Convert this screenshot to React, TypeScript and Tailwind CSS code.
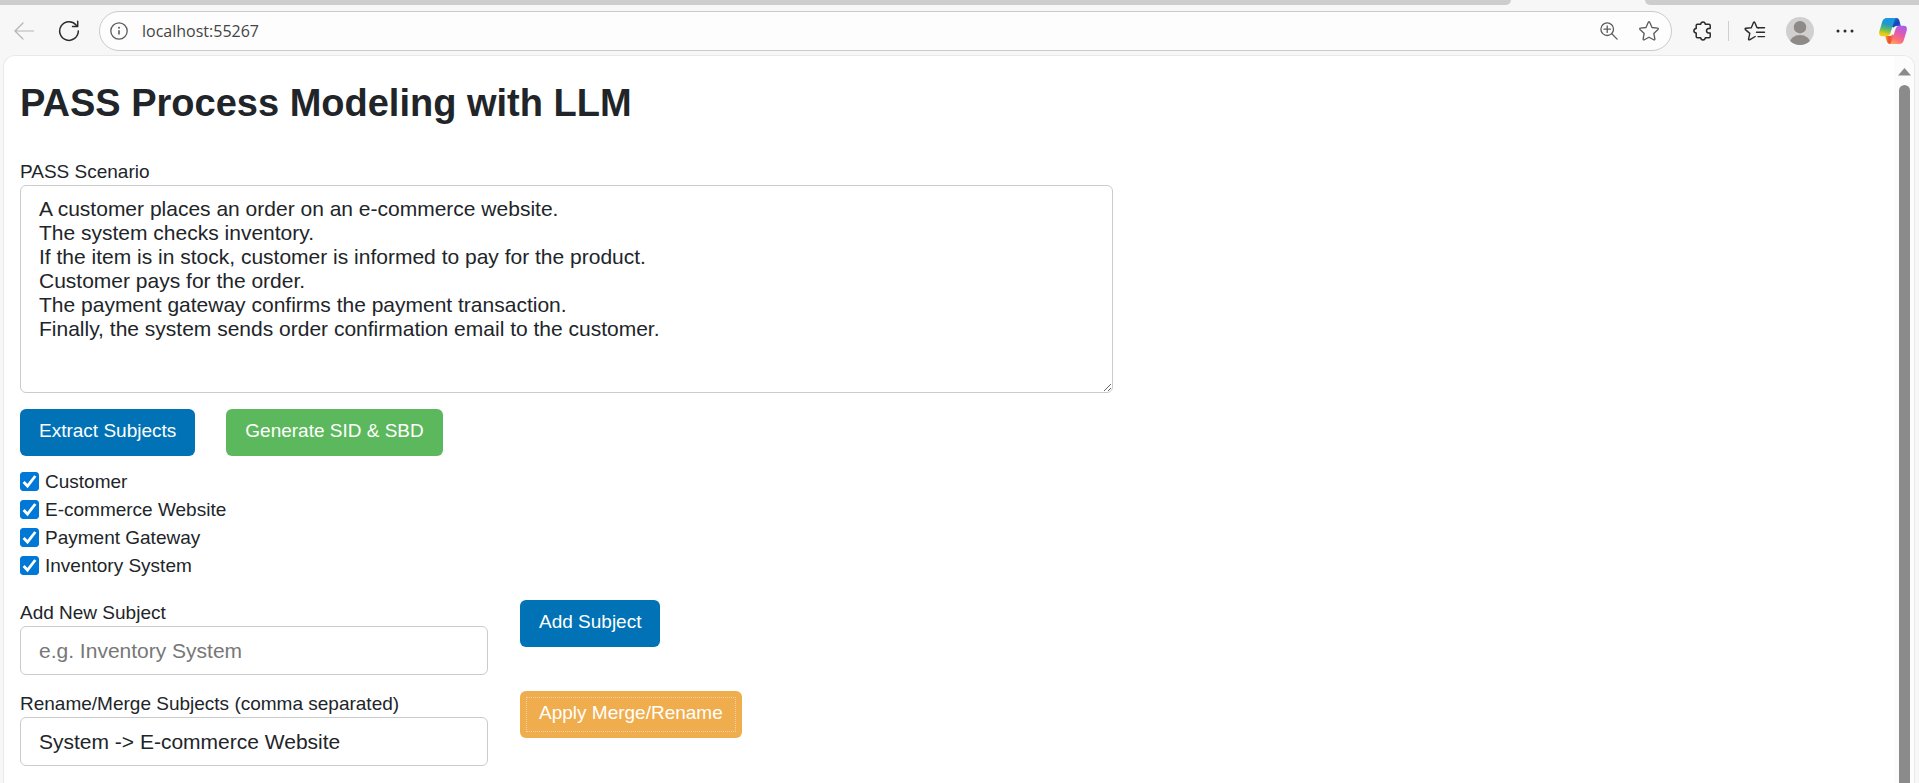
import React, { useState } from "react";

const SCENARIO = `A customer places an order on an e-commerce website.
The system checks inventory.
If the item is in stock, customer is informed to pay for the product.
Customer pays for the order.
The payment gateway confirms the payment transaction.
Finally, the system sends order confirmation email to the customer.`;

const SUBJECTS = ["Customer", "E-commerce Website", "Payment Gateway", "Inventory System"];

const line = {
  fill: "none",
  stroke: "currentColor",
  strokeLinecap: "round" as const,
  strokeLinejoin: "round" as const,
};

function BackIcon() {
  return (
    <svg width="20" height="18" viewBox="0 0 20 18" strokeWidth="1.2" {...line}>
      <path d="M19.5 9H1M9 1 1 9l8 8" />
    </svg>
  );
}

function ReloadIcon() {
  return (
    <svg width="22" height="22" viewBox="0 0 22 22" strokeWidth="1.5" {...line}>
      <path d="M20.3 11A9.3 9.3 0 1 1 17.8 4.7L19.6 6.4M19.7 1.3v5.2h-5.2" />
    </svg>
  );
}

function InfoIcon() {
  return (
    <svg width="18" height="18" viewBox="0 0 18 18" strokeWidth="1.3" {...line}>
      <circle cx="9" cy="9" r="8.2" />
      <path d="M9 8.3v4.2" strokeWidth="1.6" strokeLinecap="butt" />
      <circle cx="9" cy="5.8" r="1" fill="currentColor" stroke="none" />
    </svg>
  );
}

function ZoomIcon() {
  return (
    <svg width="18" height="18" viewBox="0 0 18 18" strokeWidth="1.3" {...line}>
      <circle cx="7.2" cy="7.2" r="6.3" />
      <path d="m11.8 11.8 5.3 5.3M7.2 4v6.4M4 7.2h6.4" />
    </svg>
  );
}

function StarIcon() {
  return (
    <svg width="20" height="20" viewBox="0 0 20 20" strokeWidth="1.3" {...line}>
      <path d="M9.3 1.3q.7-1.2 1.4 0l2.3 5.2 5.6.7q1.2.3.4 1.3l-4.2 4 1.1 5.5q0 1.3-1.2.8L10 16.2l-4.7 2.6q-1.2.5-1.2-.8l1.1-5.5L1 8.500q-.8-1 .4-1.300L7 6.500Z" />
    </svg>
  );
}

function PuzzleIcon() {
  return (
    <svg width="20" height="20" viewBox="0 0 20 20" strokeWidth="1.5" {...line}>
      <path d="M4.500 3.300H7.600Q8 .9 10 .9t2.400 2.400h3.500q1.300 0 1.300 1.300v2.900h-1.500q-2.200.3-2.200 2.300t2.200 2.300h1.500v3.300q0 1.300-1.300 1.300h-3.500Q12 19.100 10 19.100t-2.400-2.400H4.500q-1.300 0-1.300-1.300v-3.300Q.9 11.800.9 9.800t2.300-2.300V4.600q0-1.300 1.300-1.300Z" />
    </svg>
  );
}

function FavoritesIcon() {
  return (
    <svg width="22" height="20" viewBox="0 0 22 20" strokeWidth="1.4" {...line}>
      <path d="M11.200 15.500 5.600 18.800q-1.200.4-1-.9l1.200-5.500L1.400 8.600q-.8-1 .4-1.300l5.500-.6 2.200-5.200q.7-1.100 1.300 0l2.200 5.100 1.500.2" />
      <path d="M14 6.800h6.500M12.500 11.200h8M14 15.600h6.500" />
    </svg>
  );
}

function Avatar() {
  return (
    <svg width="28" height="28" viewBox="0 0 28 28">
      <defs>
        <clipPath id="avatar-clip">
          <circle cx="14" cy="14" r="14" />
        </clipPath>
      </defs>
      <g clipPath="url(#avatar-clip)">
        <rect width="28" height="28" fill="#d2d0ce" />
        <circle cx="14" cy="10.200" r="6.200" fill="#8d8a88" />
        <ellipse cx="14" cy="26.500" rx="10.500" ry="8.500" fill="#8d8a88" />
      </g>
    </svg>
  );
}

function MoreIcon() {
  return (
    <svg width="18" height="4" viewBox="0 0 18 4" fill="currentColor">
      <circle cx="2" cy="2" r="1.500" />
      <circle cx="9" cy="2" r="1.500" />
      <circle cx="16" cy="2" r="1.500" />
    </svg>
  );
}

function CopilotIcon() {
  return (
    <svg width="28" height="26" viewBox="0 0 28 26">
      <defs>
        <linearGradient id="cp-left" x1="0.5" y1="0" x2="0.3" y2="1">
          <stop offset="0" stopColor="#1b95e8" />
          <stop offset="0.35" stopColor="#2099c8" />
          <stop offset="0.65" stopColor="#6cbf55" />
          <stop offset="0.9" stopColor="#f0cc12" />
        </linearGradient>
        <linearGradient id="cp-top" x1="0" y1="0" x2="1" y2="1">
          <stop offset="0" stopColor="#1b7fe0" />
          <stop offset="0.6" stopColor="#1740b5" />
          <stop offset="1" stopColor="#2b7fe8" />
        </linearGradient>
        <linearGradient id="cp-right" x1="0.8" y1="0" x2="0.3" y2="1">
          <stop offset="0" stopColor="#a65cf0" />
          <stop offset="0.45" stopColor="#e05cae" />
          <stop offset="0.75" stopColor="#fb6f78" />
          <stop offset="1" stopColor="#ffa060" />
        </linearGradient>
        <linearGradient id="cp-bottom" x1="0" y1="0" x2="1" y2="0">
          <stop offset="0" stopColor="#f2a321" />
          <stop offset="0.4" stopColor="#ee4b35" />
          <stop offset="1" stopColor="#ff8a5c" />
        </linearGradient>
      </defs>
      <path d="M12 0h5.500q2 0 2.700 2l1.700 6h-4.500q-2 0-2.700 1.500l-3-1Z" fill="url(#cp-top)" />
      <path d="M16 26h-5q-2.200 0-2.900-2L6.200 18h4.600q1.800 0 2.500-1.500l3 1Z" fill="url(#cp-bottom)" />
      <path d="M7.800 0H17.500q-1.500.4-2.100 2.600L11.300 15.600Q10.500 18.200 7.800 18.200H3.500Q-.7 18.200.3 13.400L3.300 3.500Q4.400 0 7.800 0Z" fill="url(#cp-left)" />
      <path d="M20.200 26H10.500q1.500-.4 2.100-2.600l4.100-13Q17.500 7.800 20.200 7.800h4.400Q28.700 7.800 27.700 12.600l-3 9.900Q23.600 26 20.200 26Z" fill="url(#cp-right)" />
    </svg>
  );
}

function IconButton({ label, className = "", children }: { label: string; className?: string; children: React.ReactNode }) {
  return (
    <button type="button" aria-label={label} className={`flex shrink-0 items-center justify-center ${className}`}>
      {children}
    </button>
  );
}

function BrowserBar() {
  return (
    <header className="shrink-0">
      <div className="flex h-[5px] justify-between bg-[#f7f7f7]">
        <div className="h-full grow rounded-br-lg bg-[#cdcdcd]" />
        <div className="w-[134px] shrink-0" />
        <div className="h-full w-[274px] shrink-0 rounded-bl-lg bg-[#cdcdcd]" />
      </div>
      <div className="flex h-[50px] items-center pt-0.5 pr-3 pl-[14px] text-[#2b2b2b]">
        <IconButton label="Back" className="text-[#b5b5b5]"><BackIcon /></IconButton>
        <IconButton label="Refresh" className="ml-6"><ReloadIcon /></IconButton>
        <div className="ml-[19px] flex h-10 grow items-center rounded-full border border-[#cbcbcb] bg-[#fdfdfd] pr-3 pl-[10px] text-[#5c5c5c]">
          <IconButton label="View site information"><InfoIcon /></IconButton>
          <input
            aria-label="Address"
            defaultValue="localhost:55267"
            className="ml-[14px] min-w-0 grow bg-transparent font-['Open_Sans',sans-serif] text-base text-[#444] outline-none"
          />
          <IconButton label="Zoom"><ZoomIcon /></IconButton>
          <IconButton label="Add to favorites" className="ml-[21px]"><StarIcon /></IconButton>
        </div>
        <IconButton label="Extensions" className="ml-[21px]"><PuzzleIcon /></IconButton>
        <div className="ml-[15px] h-5 w-px bg-[#cfcfcf]" />
        <IconButton label="Favorites" className="ml-[15px]"><FavoritesIcon /></IconButton>
        <IconButton label="Profile" className="ml-5"><Avatar /></IconButton>
        <IconButton label="Settings and more" className="ml-[22px]"><MoreIcon /></IconButton>
        <IconButton label="Copilot" className="ml-[25px]"><CopilotIcon /></IconButton>
      </div>
    </header>
  );
}

const button = "h-[47px] rounded-md px-[19px] pb-[3px] text-[19px] whitespace-nowrap text-white";
const field = "block w-full rounded-md border border-[#c9cbcd] bg-white px-[18px] text-[21px] outline-none placeholder:text-[#777]";
const caption = "block text-[19px] leading-[26px]";

function SubjectCheckbox({ label }: { label: string }) {
  const [checked, setChecked] = useState(true);
  return (
    <label className="flex h-7 items-center gap-[6px] text-[19px]">
      <span className="mb-0.5 grid size-[19px]">
        <input
          type="checkbox"
          checked={checked}
          onChange={(e) => setChecked(e.target.checked)}
          className="col-start-1 row-start-1 size-[19px] appearance-none rounded-[3px] border border-[#767676] bg-white checked:border-[#0078d7] checked:bg-[#0078d7]"
        />
        {checked && (
          <svg viewBox="0 0 19 19" className="pointer-events-none col-start-1 row-start-1 size-[19px]">
            <path d="m3.600 10 3.900 4L15.300 4" fill="none" stroke="#fff" strokeWidth="2.800" />
          </svg>
        )}
      </span>
      {label}
    </label>
  );
}

export default function App() {
  return (
    <div className="flex h-screen flex-col overflow-hidden bg-[#f7f7f7] font-['Liberation_Sans',Arial,sans-serif] text-[#212529]">
      <BrowserBar />
      <div className="mr-1 ml-[3px] flex min-h-0 grow overflow-hidden rounded-t-xl border-x border-t border-[#e9e9e9] bg-white">
        <main className="min-w-0 grow pl-4">
          <h1 className="pt-6 text-[38px] leading-[46px] font-bold">PASS Process Modeling with LLM</h1>
          <div className="mt-[33px] w-[1093px] max-w-full">
            <label htmlFor="scenario" className={caption}>PASS Scenario</label>
            <textarea id="scenario" defaultValue={SCENARIO} className={`${field} h-[208px] resize py-[11px] leading-6`} />
          </div>
          <div className="mt-4 flex gap-[31px]">
            <button type="button" className={`${button} bg-[#0072b5]`}>Extract Subjects</button>
            <button type="button" className={`${button} bg-[#5cb85c]`}>Generate SID &amp; SBD</button>
          </div>
          <div className="mt-3 flex flex-col items-start">
            {SUBJECTS.map((s) => <SubjectCheckbox key={s} label={s} />)}
          </div>
          <div className="mt-5 grid grid-cols-[468px_auto] items-start justify-start gap-x-8 gap-y-4">
            <div>
              <label htmlFor="new-subject" className={caption}>Add New Subject</label>
              <input id="new-subject" placeholder="e.g. Inventory System" className={`${field} h-[49px]`} />
            </div>
            <button type="button" className={`${button} justify-self-start bg-[#0072b5]`}>Add Subject</button>
            <div>
              <label htmlFor="rename" className={caption}>Rename/Merge Subjects (comma separated)</label>
              <input id="rename" defaultValue="System -> E-commerce Website" className={`${field} h-[49px]`} />
            </div>
            <button type="button" className={`${button} bg-[#f0ad4e] outline-1 -outline-offset-7 outline-[#f3d3a5] outline-dotted`}>Apply Merge/Rename</button>
          </div>
        </main>
        <div className="flex w-5 shrink-0 flex-col items-center gap-[9px] bg-[#fcfcfc] pt-3" aria-hidden="true">
          <svg width="13" height="8" viewBox="0 0 13 8" className="shrink-0"><path d="M6.500 0 13 7.500H0Z" fill="#8b8b8b" /></svg>
          <div className="w-[11px] grow rounded-t-full bg-[#8b8b8b]" />
        </div>
      </div>
    </div>
  );
}
